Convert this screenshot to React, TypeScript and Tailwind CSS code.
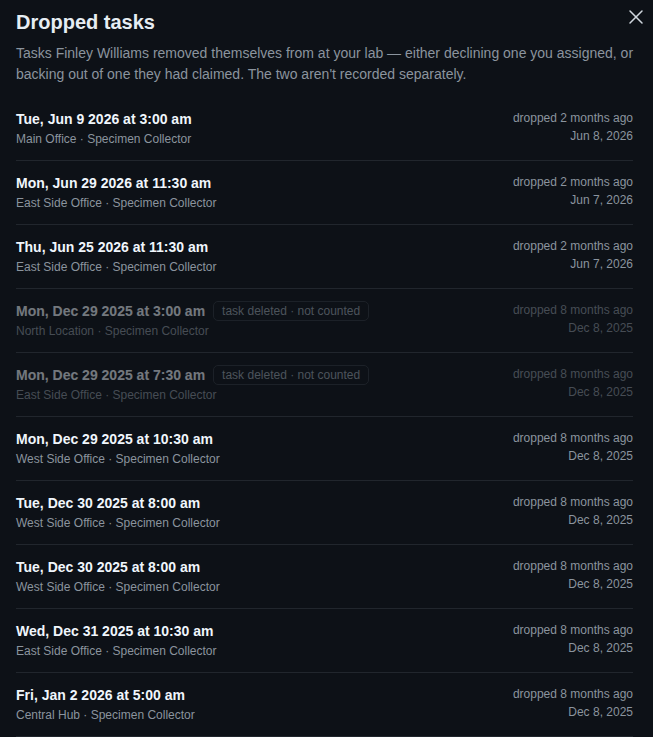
import { X } from "lucide-react";

type Drop = {
  when: string;
  place: string;
  ago: string;
  date: string;
  deleted?: boolean;
};

const drops: Drop[] = [
  { when: "Tue, Jun 9 2026 at 3:00 am", place: "Main Office", ago: "dropped 2 months ago", date: "Jun 8, 2026" },
  { when: "Mon, Jun 29 2026 at 11:30 am", place: "East Side Office", ago: "dropped 2 months ago", date: "Jun 7, 2026" },
  { when: "Thu, Jun 25 2026 at 11:30 am", place: "East Side Office", ago: "dropped 2 months ago", date: "Jun 7, 2026" },
  { when: "Mon, Dec 29 2025 at 3:00 am", place: "North Location", ago: "dropped 8 months ago", date: "Dec 8, 2025", deleted: true },
  { when: "Mon, Dec 29 2025 at 7:30 am", place: "East Side Office", ago: "dropped 8 months ago", date: "Dec 8, 2025", deleted: true },
  { when: "Mon, Dec 29 2025 at 10:30 am", place: "West Side Office", ago: "dropped 8 months ago", date: "Dec 8, 2025" },
  { when: "Tue, Dec 30 2025 at 8:00 am", place: "West Side Office", ago: "dropped 8 months ago", date: "Dec 8, 2025" },
  { when: "Tue, Dec 30 2025 at 8:00 am", place: "West Side Office", ago: "dropped 8 months ago", date: "Dec 8, 2025" },
  { when: "Wed, Dec 31 2025 at 10:30 am", place: "East Side Office", ago: "dropped 8 months ago", date: "Dec 8, 2025" },
  { when: "Fri, Jan 2 2026 at 5:00 am", place: "Central Hub", ago: "dropped 8 months ago", date: "Dec 8, 2025" },
];

function DropRow({ drop }: { drop: Drop }) {
  return (
    <li className="border-b border-[#21262d]">
      <div
        className={`flex items-start justify-between py-3 ${drop.deleted ? "opacity-45" : ""}`}
      >
        <div className="flex flex-col gap-px">
          <div className="flex items-center gap-2">
            <span className="text-sm leading-5 font-bold text-[#f0f6fc]">{drop.when}</span>
            {drop.deleted && (
              <span className="h-5 rounded-[5px] border border-[#30363d] px-2 text-xs leading-[18px] text-[#9aa3ad]">
                task deleted · not counted
              </span>
            )}
          </div>
          <span className="text-xs leading-[18px] text-[#8b949e]">
            {drop.place} · Specimen Collector
          </span>
        </div>
        <div className="flex flex-col items-end text-xs leading-[18px] text-[#8b949e]">
          <span>{drop.ago}</span>
          <span>{drop.date}</span>
        </div>
      </div>
    </li>
  );
}

export default function App() {
  return (
    <div
      className="min-h-[737px] w-full overflow-hidden bg-[#0d1117] pl-4 pr-5 pt-2"
      style={{ fontFamily: '"Liberation Sans", Arial, sans-serif' }}
    >
      {/* Header */}
      <div className="relative">
        <h2 className="text-xl leading-7 font-bold text-[#e6edf3]">Dropped tasks</h2>
        <button className="absolute -right-[15px] -top-[3px] text-[#d0d7de]">
          <X size={24} strokeWidth={1.5} />
        </button>
        <p className="-mr-1.5 mt-[7px] text-sm leading-[21px] text-[#8b949e]">
          Tasks Finley Williams removed themselves from at your lab — either declining one you
          assigned, or backing out of one they had claimed. The two aren't recorded separately.
        </p>
      </div>

      {/* List */}
      <ul className="mt-3">
        {drops.map((d, i) => (
          <DropRow key={i} drop={d} />
        ))}
      </ul>
    </div>
  );
}
